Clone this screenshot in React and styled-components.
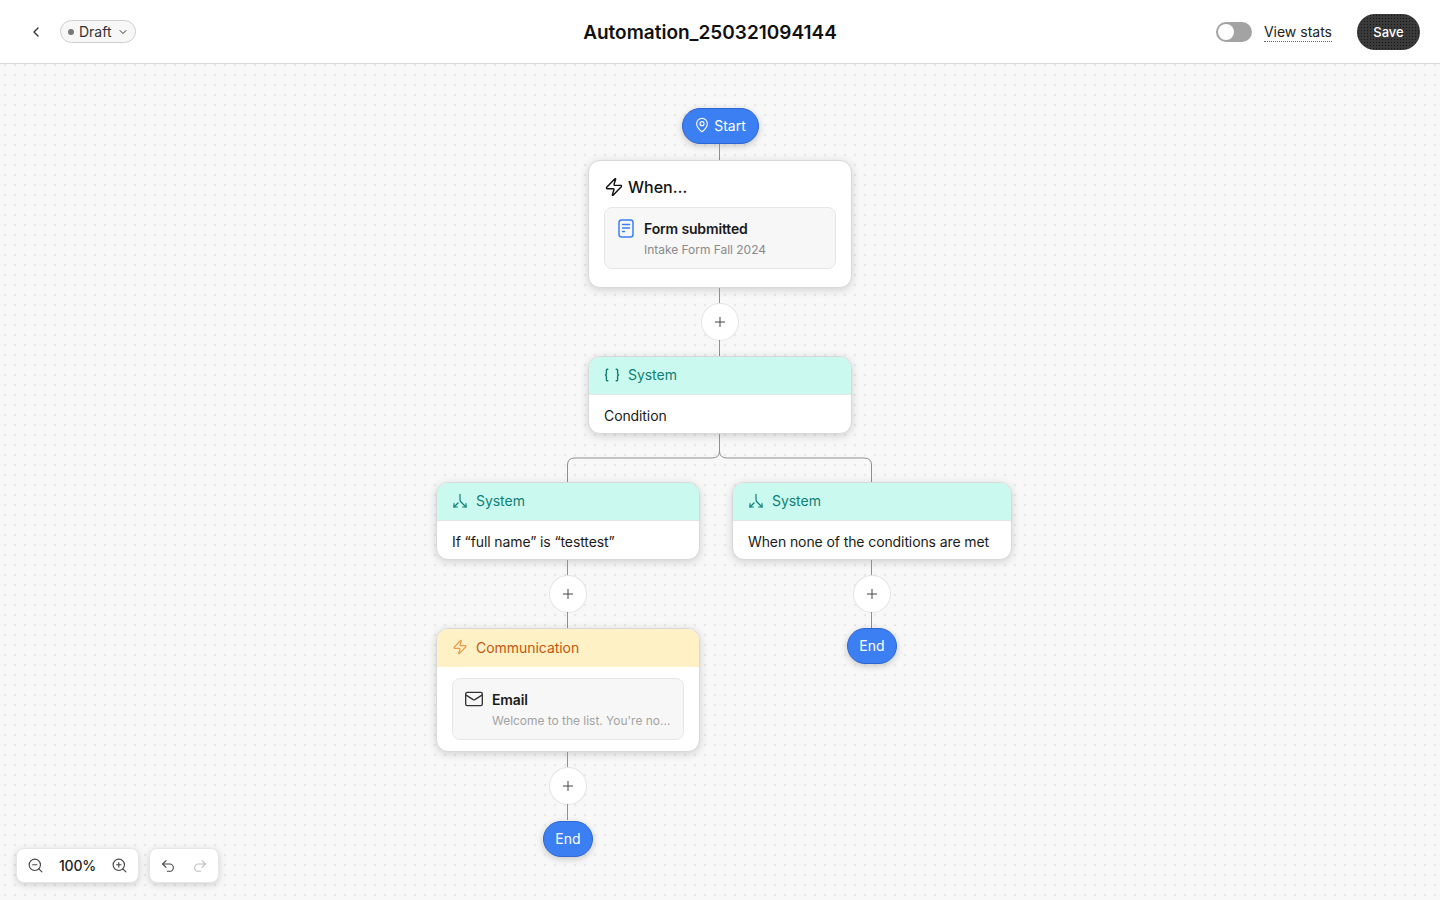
import styled, { createGlobalStyle } from 'styled-components';
import {
  ChevronLeft,
  ChevronDown,
  MapPin,
  Zap,
  Plus,
  Split,
  Mail,
  ZoomIn,
  ZoomOut,
  Undo2,
  Redo2,
} from 'lucide-react';

const GlobalStyle = createGlobalStyle`
  html, body {
    margin: 0;
    padding: 0;
    height: 100%;
    overflow: hidden;
  }
  body {
    font-family: 'Inter', 'Liberation Sans', sans-serif;
    color: #1a1a1a;
  }
  * {
    box-sizing: border-box;
  }
`;

const Page = styled.div`
  display: flex;
  flex-direction: column;
  width: 100%;
  height: 100vh;
`;

const Header = styled.header`
  display: grid;
  grid-template-columns: 1fr auto 1fr;
  align-items: center;
  height: 64px;
  flex-shrink: 0;
  padding: 0 20px 0 28px;
  background: #fff;
  border-bottom: 1px solid #d9d9d9;
`;

const HeaderLeft = styled.div`
  display: flex;
  align-items: center;
  gap: 16px;
`;

const HeaderRight = styled.div`
  display: flex;
  align-items: center;
  justify-content: flex-end;
`;

const BackButton = styled.button`
  display: flex;
  align-items: center;
  justify-content: center;
  width: 16px;
  height: 16px;
  padding: 0;
  border: 0;
  background: none;
  color: #333;
`;

const StatusPill = styled.button`
  display: flex;
  align-items: center;
  width: 76px;
  height: 23px;
  padding: 0 0 0 7px;
  border: 1px solid #cfcfcf;
  border-radius: 12px;
  background: #f7f7f7;
  color: #333;
  font-family: inherit;
  font-size: 14px;
`;

const StatusDot = styled.span`
  width: 6px;
  height: 6px;
  margin-right: 5px;
  border-radius: 50%;
  background: #777;
`;

const PillChevron = styled(ChevronDown)`
  margin-left: 5px;
`;

const Title = styled.h1`
  margin: 2px 0 0 -28px;
  font-size: 19px;
  font-weight: 600;
  color: #111;
`;

const Toggle = styled.div`
  position: relative;
  width: 36px;
  height: 20px;
  border-radius: 10px;
  background: #a3a3a3;

  &::after {
    content: '';
    position: absolute;
    left: 2px;
    top: 2px;
    width: 16px;
    height: 16px;
    border-radius: 50%;
    background: #fff;
  }
`;

const StatsLink = styled.span`
  margin-left: 12px;
  margin-top: 2px;
  padding-bottom: 1px;
  font-size: 14px;
  line-height: 17px;
  color: #222;
  border-bottom: 1px dotted #666;
`;

const SaveButton = styled.button`
  width: 63px;
  height: 36px;
  margin-left: 25px;
  border: 0;
  border-radius: 18px;
  background-color: #3a3a3a;
  background-image: radial-gradient(#161616 0.7px, transparent 0.9px);
  background-size: 3px 3px;
  color: #fff;
  font-family: inherit;
  font-size: 13px;
  font-weight: 450;
`;

const Canvas = styled.main`
  position: relative;
  flex: 1;
  display: flex;
  flex-direction: column;
  align-items: center;
  padding-top: 44px;
  overflow: hidden;
  background-color: #f8f8f8;
  background-image: radial-gradient(circle, #e8e8e8 0.9px, transparent 1.7px);
  background-size: 10px 10px;
  background-position: 0 -4px;
`;

const Branches = styled.div`
  display: flex;
  align-items: flex-start;
  gap: 32px;
  margin-left: 8px;
`;

const BranchColumn = styled.div`
  display: flex;
  flex-direction: column;
  align-items: center;
`;

const Line = styled.div`
  width: 1px;
  height: 16px;
  margin-right: 1px;
  background: #8f8f8f;
`;

const BranchLines = styled.svg`
  display: block;
  flex-shrink: 0;
`;

const Pill = styled.div`
  display: flex;
  align-items: center;
  justify-content: center;
  gap: 4px;
  width: ${(p) => p.$width}px;
  height: 36px;
  margin-top: ${(p) => p.$offset || 0}px;
  padding-bottom: 2px;
  border: 1px solid #2f66d0;
  border-radius: 18px;
  background: #3b7ff2;
  box-shadow: 0 2px 7px rgba(0, 0, 0, 0.2);
  color: #fff;
  font-size: 14px;
`;

const Card = styled.section`
  width: ${(p) => p.$width || 264}px;
  border: 1px solid #d8d8d8;
  border-radius: 12px;
  background: #fff;
  box-shadow: 0 2px 8px rgba(0, 0, 0, 0.16);
  overflow: hidden;
`;

const CardHeader = styled.div`
  display: flex;
  align-items: center;
  gap: 8px;
  height: 38px;
  padding: 0 15px 2px;
  font-size: 14px;
  background: ${(p) => (p.$tone === 'amber' ? '#fff1c6' : '#caf9ef')};
  color: ${(p) => (p.$tone === 'amber' ? '#c2570c' : '#0f7f75')};
  border-bottom: ${(p) => (p.$tone === 'amber' ? '0' : '1px solid #e4e4e4')};
  letter-spacing: -0.04px;

  svg {
    color: ${(p) => (p.$tone === 'amber' ? '#e99a4c' : '#0f7f75')};
  }
`;

const CardText = styled.div`
  height: 38px;
  padding: 2px 15px 0;
  display: flex;
  align-items: center;
  font-size: 14px;
  letter-spacing: -0.1px;
  color: #1a1a1a;
`;

const CardBody = styled.div`
  padding: ${(p) => p.$top}px 15px ${(p) => p.$bottom}px;
`;

const WhenTitle = styled.div`
  display: flex;
  align-items: center;
  gap: 4px;
  height: 20px;
  margin-bottom: 10px;
  font-size: 16px;
  font-weight: 500;
  color: #111;
`;

const ItemBox = styled.div`
  display: grid;
  grid-template-columns: 20px 1fr;
  column-gap: 8px;
  height: 62px;
  padding: 12px 10px 0 11px;
  border: 1px solid #e6e6e6;
  border-radius: 8px;
  background: #f7f7f7;
`;

const ItemIcon = styled.div`
  display: flex;
  justify-content: center;
  margin-top: ${(p) => p.$shift}px;
  color: ${(p) => p.$color};
`;

const ItemText = styled.div`
  min-width: 0;
`;

const ItemTitle = styled.div`
  font-size: 14px;
  line-height: 18px;
  font-weight: 600;
  letter-spacing: -0.15px;
  color: #1a1a1a;
`;

const ItemSub = styled.div`
  margin-top: 4px;
  font-size: 12px;
  line-height: 15px;
  letter-spacing: -0.03px;
  color: ${(p) => p.$color || '#8a8a8a'};
  white-space: nowrap;
`;

const PlusButton = styled.button`
  display: flex;
  align-items: center;
  justify-content: center;
  width: 36px;
  height: 36px;
  padding: 0;
  border: 0;
  border-radius: 50%;
  background: #fff;
  box-shadow: 0 0 0 1px #e4e4e4;
  color: #444;
`;

const Toolbar = styled.div`
  position: absolute;
  left: 16px;
  bottom: 17px;
  display: flex;
  gap: 10px;
`;

const ToolGroup = styled.div`
  display: flex;
  align-items: center;
  justify-content: space-between;
  width: ${(p) => p.$width}px;
  height: 35px;
  padding: 0 10px;
  border-radius: 8px;
  background: #fff;
  border: 1px solid #e6e6e6;
  box-shadow: 0 2px 7px rgba(0, 0, 0, 0.16);
  color: #444;
`;

const ZoomValue = styled.span`
  font-size: 14px;
  font-weight: 500;
  letter-spacing: -0.2px;
  color: #222;
`;

const DocIcon = () => (
  <svg width="16" height="19" viewBox="0 0 16 19" fill="none" stroke="currentColor" strokeWidth="1.5" strokeLinecap="round">
    <rect x="1" y="1" width="14" height="17" rx="2.5" />
    <path d="M4.5 5.5h7M4.5 9h7M4.5 12.5h2" />
  </svg>
);

const BracesIcon = () => (
  <svg width="16" height="16" viewBox="0 0 16 16" fill="none" stroke="currentColor" strokeWidth="1.4" strokeLinecap="round" strokeLinejoin="round">
    <path d="M3.8 2.2H3.3Q2.4 2.2 2.4 3.2V6.6Q2.4 7.6 1.5 8Q2.4 8.4 2.4 9.4V12.8Q2.4 13.8 3.3 13.8H3.8" />
    <path d="M12.2 2.2H12.7Q13.6 2.2 13.6 3.2V6.6Q13.6 7.6 14.5 8Q13.6 8.4 13.6 9.4V12.8Q13.6 13.8 12.7 13.8H12.2" />
  </svg>
);

const Connector = () => <Line />;

const AddStep = () => (
  <>
    <Connector />
    <PlusButton>
      <Plus size={16} strokeWidth={1.5} />
    </PlusButton>
    <Connector />
  </>
);

const SystemCard = ({ width, icon, text }) => (
  <Card $width={width}>
    <CardHeader>
      {icon}
      System
    </CardHeader>
    <CardText>{text}</CardText>
  </Card>
);

const splitIcon = <Split size={16} strokeWidth={1.8} style={{ transform: 'rotate(180deg)' }} />;

export default function App() {
  return (
    <Page>
      <GlobalStyle />
      <Header>
        <HeaderLeft>
          <BackButton>
            <ChevronLeft size={16} />
          </BackButton>
          <StatusPill>
            <StatusDot />
            Draft
            <PillChevron size={12} />
          </StatusPill>
        </HeaderLeft>
        <Title>Automation_250321094144</Title>
        <HeaderRight>
          <Toggle />
          <StatsLink>View stats</StatsLink>
          <SaveButton>Save</SaveButton>
        </HeaderRight>
      </Header>
      <Canvas>
        <Pill $width={77}>
          <MapPin size={16} strokeWidth={1.7} />
          Start
        </Pill>
        <Connector />
        <Card>
          <CardBody $top={16} $bottom={18}>
            <WhenTitle>
              <Zap size={20} strokeWidth={1.7} />
              When…
            </WhenTitle>
            <ItemBox>
              <ItemIcon $color="#3b7ff2" $shift={-1}>
                <DocIcon />
              </ItemIcon>
              <ItemText>
                <ItemTitle>Form submitted</ItemTitle>
                <ItemSub>Intake Form Fall 2024</ItemSub>
              </ItemText>
            </ItemBox>
          </CardBody>
        </Card>
        <AddStep />
        <SystemCard icon={<BracesIcon />} text="Condition" />
        <BranchLines width="306" height="48" viewBox="0 0 306 48" fill="none" stroke="#8f8f8f">
          <path d="M152.5 0V17Q152.5 24 145 24H8Q0.5 24 0.5 31V48" />
          <path d="M152.5 17Q152.5 24 160 24H297Q304.5 24 304.5 31V48" />
        </BranchLines>
        <Branches>
          <BranchColumn>
            <SystemCard icon={splitIcon} text="If “full name” is “testtest”" />
            <AddStep />
            <Card>
              <CardHeader $tone="amber">
                <Zap size={16} strokeWidth={1.8} />
                Communication
              </CardHeader>
              <CardBody $top={11} $bottom={11}>
                <ItemBox>
                  <ItemIcon $color="#333" $shift={-2}>
                    <Mail size={20} strokeWidth={1.6} />
                  </ItemIcon>
                  <ItemText>
                    <ItemTitle>Email</ItemTitle>
                    <ItemSub $color="#a3a3a3">Welcome to the list. You're no…</ItemSub>
                  </ItemText>
                </ItemBox>
              </CardBody>
            </Card>
            <AddStep />
            <Pill $width={50} $offset={1}>End</Pill>
          </BranchColumn>
          <BranchColumn>
            <SystemCard width={280} icon={splitIcon} text="When none of the conditions are met" />
            <AddStep />
            <Pill $width={50}>End</Pill>
          </BranchColumn>
        </Branches>
        <Toolbar>
          <ToolGroup $width={123}>
            <ZoomOut size={17} strokeWidth={1.6} />
            <ZoomValue>100%</ZoomValue>
            <ZoomIn size={17} strokeWidth={1.6} />
          </ToolGroup>
          <ToolGroup $width={70}>
            <Undo2 size={16} strokeWidth={1.6} />
            <Redo2 size={16} strokeWidth={1.6} color="#bdbdbd" />
          </ToolGroup>
        </Toolbar>
      </Canvas>
    </Page>
  );
}
